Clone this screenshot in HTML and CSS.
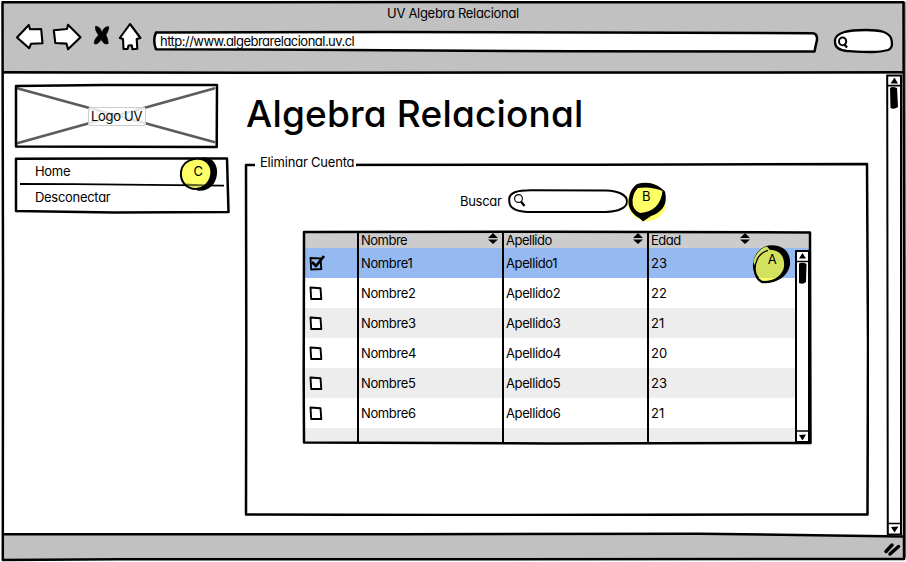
FILE: index.html
```html
<!DOCTYPE html>
<html lang="es">
<head>
<meta charset="utf-8">
<title>UV Algebra Relacional</title>
<link rel="stylesheet" href="styles.css">
</head>
<body>
<div class="window">
  <header class="chrome">
    <div class="window-title"><span>UV Algebra Relacional</span></div>
    <div class="toolbar">
      <svg class="nav-icons" width="130" height="32" viewBox="14 21 130 32">
        <g fill="#fff" stroke="#000" stroke-width="2.1" stroke-linejoin="round">
          <path d="M17 37.5 28.8 25 30 29.3 41.2 29 42.5 43.3 31 43.8 29.2 48.2Z"/>
          <path d="M53.8 30.2 67 29 68 24.8 80.5 37.3 68 49.3 66.5 43.6 55.3 43Z"/>
          <path d="M130 24 140.5 38 136.7 39 137.3 48.8 132.4 49.2 131.8 45.3 128.5 45.5 127.6 49 123.5 49 123 39 119.8 38Z"/>
        </g>
        <path d="M95.5 26.2Q100 26 102 32.5Q103.5 26.5 108.5 26.5Q109.5 29 106 34.8Q108 39 108.3 43.5Q104 45.5 101 39.3Q98.5 44.8 94.5 44Q93 41 98.5 35Q94.5 30 95.5 26.2Z" stroke="#000" stroke-width=".6"/>
      </svg>
      <div class="address">
        <svg class="sketch" viewBox="0 0 666 24"><path d="M3 2.6 230 2 660 3.2Q664.5 3.8 664 10 662.5 16 661.6 21.4L420 21.3 150 19.8 3 19.2Q-.5 10 3 2.6Z"/></svg>
        <span>http://www.algebrarelacional.uv.cl</span>
      </div>
      <svg class="chrome-search" width="62" height="28" viewBox="832 27 62 28">
        <path d="M835 42C834 32 849 30 866 30 881 30 888 32 891 38Q894 48 888 50C878 53 864 52 847 51Q835 50 835 42Z" fill="#fff" stroke="#000" stroke-width="2.3"/>
        <ellipse cx="842.6" cy="41.4" rx="3.6" ry="3.8" fill="#fff" stroke="#000" stroke-width="2"/>
        <path d="M844 44 847 47.5" stroke="#000" stroke-width="2.4"/>
      </svg>
    </div>
  </header>

  <main class="page">
    <aside class="side">
      <div class="logo">
        <svg class="sketch" viewBox="0 0 205 66">
          <path d="M4 5.5 200 59M200 5.5 4 60" stroke="#5c5c5c" stroke-width="2.8" stroke-linecap="round"/>
          <path class="hollow" d="M2 3 90 2 203 2 202.7 64 2 63.6Z"/>
        </svg>
        <span class="logo-label">Logo UV</span>
      </div>
      <nav class="menu">
        <svg class="sketch" viewBox="0 0 216 58">
          <path d="M2 2.8 110 2.4 213 2.5 214.5 56 100 56.5 2 55Z"/>
          <path d="M6 28 60 28.2 210 29.7" stroke-width="1.8"/>
        </svg>
        <a>Home</a>
        <a>Desconectar</a>
        <div class="badge badge-c">
          <svg width="40" height="36" viewBox="179 156 40 36">
            <path d="M200 158C213 155 219 164 218 174 217 185 209 192 198 190.5Z"/>
            <path class="disc" d="M195 159C206 157 213 164 212.3 174 211 184 204 188.5 197 189 187 189 181 181 182 172 183 164 189 160 195 159Z"/>
            <path d="M184 185Q190 187 212 186L213 184.8 184 183.5Z" opacity=".6"/>
          </svg>
          <span>C</span>
        </div>
      </nav>
    </aside>

    <section class="content">
      <h1><span>Algebra Relacional</span></h1>
      <div class="group">
        <svg class="sketch" viewBox="0 0 625 354">
          <path class="hollow" d="M2 3 350 2.8 623 2 624 180 623.5 352.5 200 353 2 352.5 2.3 180Z"/>
        </svg>
        <h2><span>Eliminar Cuenta</span></h2>
        <div class="search">
          <label>Buscar</label>
          <div class="search-box">
            <svg class="sketch" viewBox="0 0 122 26">
              <path d="M2.3 13C1 4 11 2.2 24 2.2L99 2.5C112 3 120 7 120 13.5 120 20 111 23.5 99 24L20 24Q2 23 2.3 13Z" stroke-width="2"/>
              <circle cx="11.5" cy="10.5" r="3.9" stroke-width="1.1"/><path d="M14 13.5 17.5 18" stroke-width="2.2"/>
            </svg>
          </div>
          <div class="badge badge-b">
            <svg width="40" height="42" viewBox="627 181 40 42">
              <circle cx="647" cy="202" r="19.3" fill="#ffff66"/>
              <path d="M637 184C647 181 657 183 665 191.500 668 205 662 212 651 216L643 221.500 640 218.500C631 214 627 206 629 198 630 191 633 187 637 184Z"/>
              <path class="flat" d="M638 188Q651 186 662.5 191C661 204 654 212 640 213Q632 210 632.5 200 634 191 638 188Z"/>
            </svg>
            <span>B</span>
          </div>
        </div>

        <div class="grid">
          <div class="rows">
            <div class="row head"><i></i><b><span>Nombre</span><svg width="10" height="11"><path d="M0 5 5 0 10 5ZM0 6.6H10L5 11Z"/></svg></b><b><span>Apellido</span><svg width="10" height="11"><path d="M0 5 5 0 10 5ZM0 6.6H10L5 11Z"/></svg></b><b class="age"><span>Edad</span><svg width="10" height="11"><path d="M0 5 5 0 10 5ZM0 6.6H10L5 11Z"/></svg></b></div>
            <div class="row picked"><i><svg class="check" width="18" height="18"><path d="M2.5 4 12.5 4.4 13.3 15 3.2 15.5Z"/><path d="M4 8 8 12 16 2" stroke-width="2.8"/></svg></i><span>Nombre1</span><span>Apellido1</span><span class="num">23</span></div>
            <div class="row"><i><svg class="check" width="18" height="18"><path d="M2.5 3.5 12.5 4.2 13.3 15 3.2 15Z"/></svg></i><span>Nombre2</span><span>Apellido2</span><span class="num">22</span></div>
            <div class="row"><i><svg class="check" width="18" height="18"><path d="M2.5 3.5 12.5 4.2 13.3 15 3.2 15Z"/></svg></i><span>Nombre3</span><span>Apellido3</span><span class="num">21</span></div>
            <div class="row"><i><svg class="check" width="18" height="18"><path d="M2.5 3.5 12.5 4.2 13.3 15 3.2 15Z"/></svg></i><span>Nombre4</span><span>Apellido4</span><span class="num">20</span></div>
            <div class="row"><i><svg class="check" width="18" height="18"><path d="M2.5 3.5 12.5 4.2 13.3 15 3.2 15Z"/></svg></i><span>Nombre5</span><span>Apellido5</span><span class="num">23</span></div>
            <div class="row"><i><svg class="check" width="18" height="18"><path d="M2.5 3.5 12.5 4.2 13.3 15 3.2 15Z"/></svg></i><span>Nombre6</span><span>Apellido6</span><span class="num">21</span></div>
            <div class="row last"></div>
          </div>
          <svg class="sketch" viewBox="0 0 510 215">
            <path class="hollow" d="M2 2 250 1.7 508 2.5 508.5 213 250 213.5 2 212.5 1.7 150Z"/>
            <path class="hollow" d="M56 2V213M201 2V213M346 2V213" stroke-width="2"/>
            <g transform="translate(493 20)">
              <path d="M1 1 14 1V192H1Z" stroke-width="2"/>
              <path d="M1 11.5H14M1 181H14" stroke-width="1.5"/>
              <path d="M4 8.5 7.5 3 11 8.5ZM4 185 11 184.5 7.5 190.5Z" fill="#000" stroke="none"/>
              <path d="M4 13.5Q8 12 11.5 14L11 32Q8 35 4 33Z" fill="#000" stroke="none"/>
            </g>
          </svg>
          <div class="badge badge-a">
            <svg width="40" height="40" viewBox="753 244 40 40">
              <path d="M754 268C753 255 762 245.500 772 245.300 786 245 792 254 791 265 789 276 778 284 763 283.300Q756 281 754 268Z"/>
              <path class="muted" d="M754.300 262C757 252 763 247.500 768 246.500L771 250C782 249.500 787 259 784.500 269 781 278 773 281.500 763 280.500Q757 277 756.500 267Z"/>
              <path d="M756 268C757 259 761 252.500 769 250.300" fill="none" stroke="#000" stroke-width="1.300"/>
              <path d="M759.500 278H777Q770 281.500 763 280.500Z" fill="#ffff66"/>
            </svg>
            <span>A</span>
          </div>
        </div>
      </div>
    </section>

    <svg class="page-scroll" width="18" height="462" viewBox="885 73 18 462">
      <path d="M887.2 74.5H901V533.5H887.8Z" fill="#fff" stroke="#000" stroke-width="2"/>
      <path d="M887 84.7H901M887 522.5H901" stroke="#000" stroke-width="1.7"/>
      <path d="M890.5 82.5 894.5 76.5 898 82.5ZM891 526 898.5 525.5 894.5 531.5Z"/>
      <path d="M890 87Q892 85 897 87L898 106Q894 109 890.5 107Z"/>
    </svg>
  </main>

  <footer class="status">
    <svg width="18" height="15" viewBox="883 542 18 15"><path d="M886 551.5 892 545M890 554 898.5 546.5" stroke="#000" stroke-width="3.5" stroke-linecap="round"/></svg>
  </footer>

  <svg class="frame" viewBox="0 0 906 562">
    <path d="M905 2 905.5 558" stroke="#777" stroke-width="1.5"/>
    <path d="M2.5 2.3 450 2.1 903.5 2.3 904 280 904 559 450 559.3 120 559.3 2.8 560 3 280Z"/>
    <path d="M3 72.3 250 72.8 904 72.3M3 534.3 400 534.3 700 533.7 903 536.5"/>
  </svg>
</div>
</body>
</html>
```
FILE: styles.css
```css
* { box-sizing: border-box; }
body {
  margin: 0;
  background: #fff;
  color: #000;
  font: 13px/16px Inter, "Liberation Sans", sans-serif;
  font-feature-settings: "cv11", "ss03", "calt" 0;
  letter-spacing: -.3px;
}
svg { display: block; }
.window {
  position: relative;
  display: flex;
  flex-direction: column;
  width: 906px;
  height: 562px;
  padding: 2px 3px;
  overflow: hidden;
}
.frame, .sketch {
  position: absolute;
  inset: 0;
  width: 100%;
  height: 100%;
  fill: none;
  stroke: #000;
  stroke-width: 2.5;
  stroke-linejoin: round;
  pointer-events: none;
}
.chrome { height: 72px; flex: none; background: #c1c1c1; }
.window-title { text-align: center; padding-top: 3px; }
.toolbar { display: flex; padding-left: 11px; }
.nav-icons { flex: none; }
.address {
  position: relative;
  width: 666px;
  height: 24px;
  margin: 9px 0 0 9px;
  padding: 3px 7px;
  letter-spacing: -.52px;
}
.address span { position: relative; }
.address .sketch { fill: #fff; }
.chrome-search { margin: 6px 0 0 13px; }
.page { display: flex; height: 461px; background: #fff; }
.side { width: 231px; padding: 9px 0 0 12px; }
.logo {
  position: relative;
  display: flex;
  justify-content: center;
  align-items: center;
  width: 205px;
  height: 66px;
  margin-left: -1px;
}
.logo-label {
  position: relative;
  width: 58px;
  height: 19px;
  text-align: center;
  white-space: nowrap;
  background: rgba(255, 255, 255, .83);
  border: 1px solid #ccc;
  border-radius: 2px;
}
.menu {
  position: relative;
  width: 216px;
  height: 58px;
  margin: 7px 0 0 -1px;
  padding: 3px 0 0 21px;
}
.menu a { position: relative; display: block; height: 26px; line-height: 24px; }
.menu .sketch { fill: #fff; }
.badge { position: absolute; }
.badge span { position: absolute; inset: 0; text-align: center; }
.disc, .flat { fill: #ffff66; stroke: #000; stroke-width: 2; }
.flat { stroke: none; }
.muted { fill: #d2e25e; }
.badge-c { left: 164px; top: 0; }
.badge-c span { padding-top: 7px; }
.content { width: 649px; padding: 9px 0 0 10px; }
h1, h2 { margin: 0; font-weight: 400; }
h1 {
  height: 79px;
  padding: 8px 0 0 2px;
  font-size: 37px;
  font-weight: 500;
  line-height: 46px;
  letter-spacing: .18px;
  white-space: nowrap;
}
.group { position: relative; display: flow-root; width: 625px; height: 354px; }
h2 {
  position: relative;
  width: 101px;
  height: 16px;
  margin: -8px 0 0 11px;
  padding-left: 5px;
  background: #fff;
  font-size: 13px;
  line-height: 16px;
  letter-spacing: -.2px;
  white-space: nowrap;
}
.search { position: relative; display: flex; margin: 18px 0 0 216px; height: 26px; }
.search label { width: 47px; padding-top: 5px; }
.search-box { position: relative; width: 122px; height: 26px; }
.search-box .sketch { fill: #fff; }
.badge-b { left: 167px; top: -7px; }
.badge-b span { padding: 7px 2px 0 0; }
.grid { position: relative; width: 510px; height: 215px; margin: 16px 0 0 58px; }
.grid .sketch { fill: #fff; }
.grid .sketch .hollow, .hollow { fill: none; }
.rows { height: 213px; width: 508px; overflow: hidden; padding: 2px 0 0 2px; }
.row {
  display: grid;
  grid-template-columns: 54px 145px 145px 1fr;
  height: 30px;
  line-height: 31px;
}
.row > span { padding-left: 3px; letter-spacing: -.38px; }
.row > .num { letter-spacing: 0; }
.row:nth-child(even) { background: #ededed; }
.row.head { height: 16px; line-height: 17px; background: #ccc; letter-spacing: -.5px; }
.row.picked { background: #94baf1; }
.row b {
  display: flex;
  justify-content: space-between;
  padding: 0 5px 0 3px;
  font-weight: 400;
}
.row b svg { margin-top: 1px; }
.row .age { width: 107px; }
.check { margin: 6px 0 0 4px; fill: #fff; stroke: #000; stroke-width: 1.9; stroke-linejoin: round; }
.picked .check { fill: none; }
.badge-a { left: 450px; top: 14px; }
.badge-a span { padding-top: 7px; }
.page-scroll { margin: 0 0 0 2px; flex: none; }
.status { height: 25px; background: #c1c1c1; padding: 7px 0 0 880px; }
```
